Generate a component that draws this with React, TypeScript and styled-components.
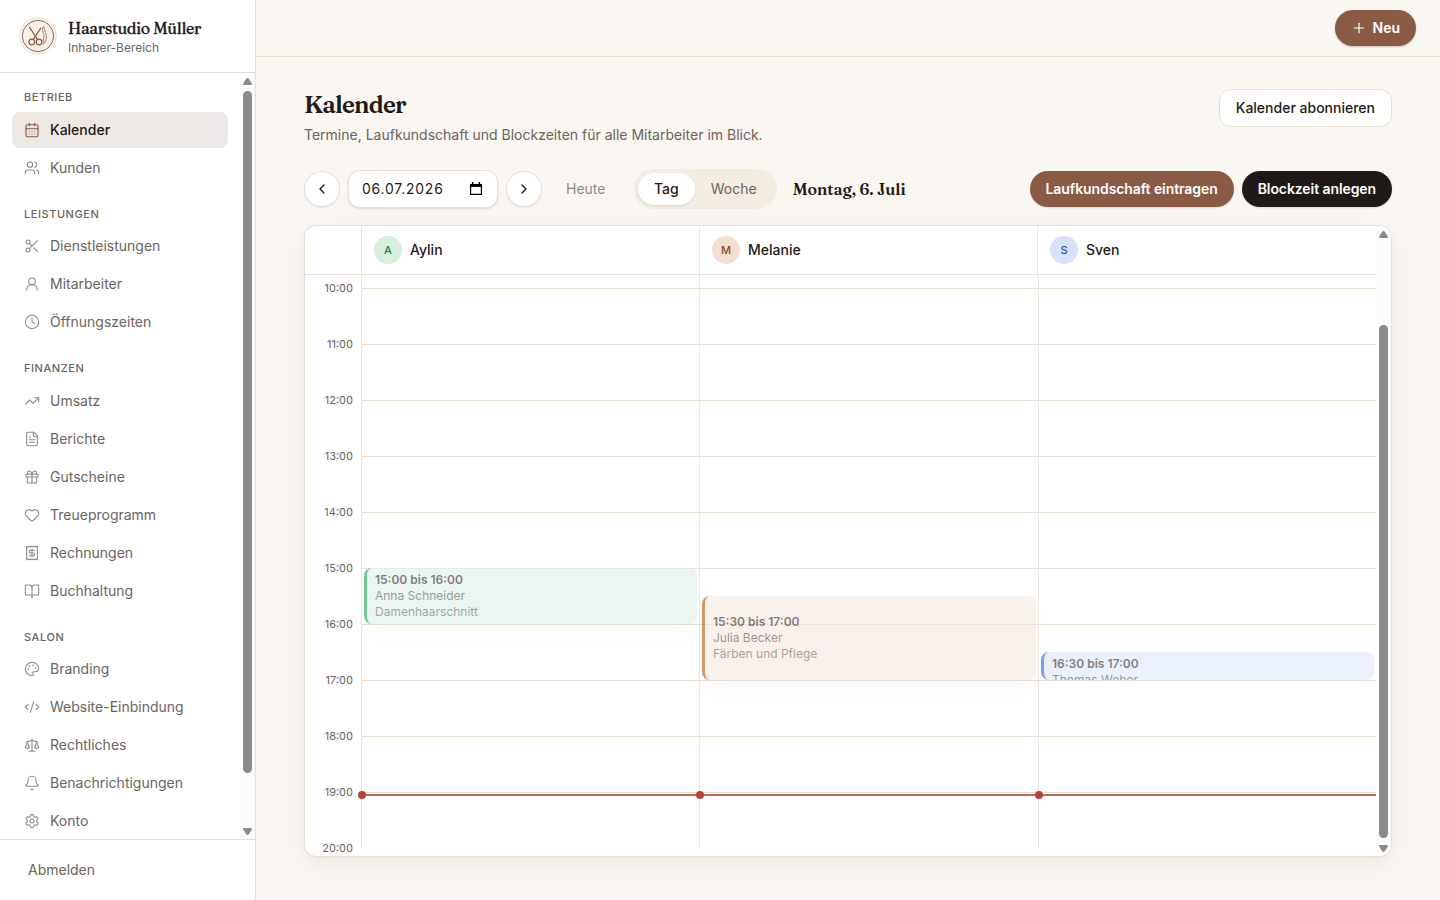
import React from "react";
import styled, { createGlobalStyle } from "styled-components";
import {
  CalendarDays, Users, Scissors, UserRound, Clock, TrendingUp, FileText, Gift, Heart, Receipt,
  BookOpen, Palette, CodeXml, Scale, Bell, Settings, Plus, ChevronLeft, ChevronRight,
  type LucideIcon,
} from "lucide-react";

const c = {
  bg: "#faf6f1",
  line: "#e8dfd3",
  column: "#eee7dd",
  ink: "#1f1a17",
  muted: "#6b6460",
  soft: "#8f8984",
  brand: "#8b5a44",
  now: "#b8403a",
  thumb: "#8b8b8b",
};

const GlobalStyle = createGlobalStyle`
  *, *::before, *::after { box-sizing: border-box; }
  html, body { margin: 0; padding: 0; }
  body {
    background: ${c.bg};
    color: ${c.ink};
    font-family: Inter, "Liberation Sans", sans-serif;
    font-size: 14px;
    line-height: 20px;
  }
  button { font: inherit; cursor: pointer; margin: 0; }
`;

const serif = `Fraunces, "Liberation Serif", serif`;

const Shell = styled.div`
  display: flex;
  width: 1440px;
  height: 900px;
  overflow: hidden;
`;

const Sidebar = styled.aside`
  display: flex;
  flex-direction: column;
  width: 256px;
  flex: none;
  background: #fff;
  border-right: 1px solid ${c.line};
`;

const Brand = styled.div`
  display: flex;
  align-items: center;
  gap: 12px;
  height: 73px;
  flex: none;
  padding: 0 20px;
  border-bottom: 1px solid ${c.line};
  svg { display: block; margin: 0 -1px; }
`;

const BrandText = styled.div`
  padding-top: 1px;
`;

const BrandName = styled.div`
  font: 500 16px/20px ${serif};
  letter-spacing: -0.32px;
  -webkit-text-stroke: 0.3px ${c.ink};
  white-space: nowrap;
`;

const BrandRole = styled.div`
  font-size: 12px;
  line-height: 16px;
  margin-top: 2px;
  color: ${c.muted};
`;

const NavArea = styled.div`
  display: flex;
  flex: 1;
  min-height: 0;
  overflow: hidden;
`;

const Nav = styled.nav`
  display: flex;
  flex-direction: column;
  flex: 1;
  gap: 20px;
  padding: 16px 12px;
`;

const NavTitle = styled.div`
  font-size: 11px;
  line-height: 16.5px;
  font-weight: 500;
  letter-spacing: 0.55px;
  text-transform: uppercase;
  color: ${c.muted};
  padding: 0 12px 6px;
`;

const NavList = styled.div`
  display: flex;
  flex-direction: column;
  gap: 2px;
`;

const NavItem = styled.a<{ $active?: boolean }>`
  display: flex;
  align-items: center;
  gap: 10px;
  height: 36px;
  padding: 0 12px;
  border-radius: 8px;
  font-weight: ${(p) => (p.$active ? 500 : 400)};
  color: ${(p) => (p.$active ? c.ink : c.muted)};
  background: ${(p) => (p.$active ? "#eee8e4" : "transparent")};
  svg { color: ${(p) => (p.$active ? c.brand : c.soft)}; }
`;

const Track = styled.div`
  display: flex;
  flex-direction: column;
  align-items: center;
  width: 15px;
  flex: none;
  background: #fcfcfc;
`;

const Thumb = styled.div<{ $before: number; $size: number }>`
  width: 9px;
  height: ${(p) => p.$size}px;
  margin-top: ${(p) => p.$before}px;
  border-radius: 5px;
  background: ${c.thumb};
`;

const Arrow = styled.svg`
  display: block;
  flex: none;
  width: 9px;
  height: 7px;
  fill: ${c.thumb};
`;
const ArrowUp = styled(Arrow)`margin-top: 5px;`;
const ArrowDown = styled(Arrow)`margin: auto 0 4px;`;

const Footer = styled.div`
  display: flex;
  align-items: center;
  height: 61px;
  flex: none;
  padding: 0 28px;
  border-top: 1px solid ${c.line};
  color: ${c.muted};
`;

const Main = styled.main`
  display: flex;
  flex-direction: column;
  flex: 1;
  min-width: 0;
`;

const TopBar = styled.header`
  display: flex;
  align-items: center;
  justify-content: flex-end;
  height: 57px;
  flex: none;
  padding: 0 24px;
  border-bottom: 1px solid ${c.line};
`;

const Pill = styled.button<{ $dark?: boolean; $strong?: boolean }>`
  display: flex;
  align-items: center;
  gap: 6px;
  height: 36px;
  padding: 0 16px;
  border: 0;
  border-radius: 18px;
  font-weight: 600;
  letter-spacing: ${(p) => (p.$strong ? "0" : "-0.085px")};
  color: #fff;
  background: ${(p) => (p.$dark ? c.ink : c.brand)};
  box-shadow: 0 1px 2px rgba(31, 26, 23, ${(p) => (p.$strong ? 0.25 : 0.12)});
  white-space: nowrap;
`;

const Content = styled.div`
  display: flex;
  flex-direction: column;
  flex: 1;
  min-height: 0;
  padding: 32px 48px 43px;
`;

const PageHead = styled.div`
  display: flex;
  justify-content: space-between;
  align-items: flex-start;
  height: 80px;
  flex: none;
`;

const Title = styled.h1`
  margin: 0;
  font: 600 24px/32px ${serif};
  letter-spacing: -0.78px;
`;

const Subtitle = styled.p`
  margin: 4px 0 0;
  color: ${c.muted};
`;

const Subscribe = styled.button`
  height: 38px;
  padding: 0 16px;
  border: 1px solid ${c.line};
  border-radius: 12px;
  background: #fff;
  color: ${c.ink};
  font-weight: 500;
`;

const Toolbar = styled.div`
  display: flex;
  align-items: center;
  height: 40px;
  flex: none;
  margin-bottom: 16px;
`;

const RoundButton = styled.button`
  display: flex;
  align-items: center;
  justify-content: center;
  width: 36px;
  height: 36px;
  padding: 0;
  border: 1px solid ${c.line};
  border-radius: 50%;
  background: #fff;
  color: ${c.ink};
  box-shadow: 0 1px 2px rgba(31, 26, 23, 0.08);
`;

const DateField = styled.div`
  display: flex;
  align-items: center;
  justify-content: space-between;
  width: 150px;
  height: 38px;
  margin: 0 8px;
  padding: 0 14px 0 13px;
  border: 1px solid ${c.line};
  border-radius: 12px;
  background: #fff;
  box-shadow: 0 1px 2px rgba(31, 26, 23, 0.12);
  letter-spacing: 0.75px;
`;

const Today = styled.button`
  border: 0;
  background: none;
  padding: 0;
  margin: 0 28.5px 0 24px;
  color: ${c.soft};
`;

const Segments = styled.div`
  display: flex;
  height: 40px;
  padding: 4px;
  border-radius: 20px;
  background: #f3ece2;
`;

const Segment = styled.button<{ $on?: boolean }>`
  height: 32px;
  padding: 0 16px;
  border: 0;
  border-radius: 16px;
  font-weight: ${(p) => (p.$on ? 500 : 400)};
  color: ${(p) => (p.$on ? c.ink : c.muted)};
  background: ${(p) => (p.$on ? "#fff" : "transparent")};
  box-shadow: ${(p) => (p.$on ? "0 1px 2px rgba(31, 26, 23, 0.12)" : "none")};
`;

const DayLabel = styled.div`
  margin-left: 16px;
  font: 600 16px/24px ${serif};
  letter-spacing: -0.05px;
  white-space: nowrap;
`;

const Actions = styled.div`
  display: flex;
  gap: 8px;
  margin-left: auto;
`;

const Card = styled.section`
  display: flex;
  flex: 1;
  min-height: 0;
  border: 1px solid ${c.line};
  border-radius: 12px;
  background: #fff;
  overflow: hidden;
  box-shadow: 0 1px 2px rgba(31, 26, 23, 0.04), 0 8px 24px -4px rgba(31, 26, 23, 0.08);
`;

const Board = styled.div`
  display: flex;
  flex-direction: column;
  flex: 1;
`;

const Staff = styled.div`
  display: grid;
  grid-template-columns: 56px 338px 338px 339px;
  height: 49px;
  flex: none;
  border-bottom: 1px solid ${c.line};
`;

const StaffCell = styled.div`
  display: flex;
  align-items: center;
  gap: 8px;
  padding-left: 12px;
  border-left: 1px solid ${c.column};
  font-weight: 500;
`;

const Avatar = styled.span<{ $bg: string; $fg: string }>`
  display: flex;
  align-items: center;
  justify-content: center;
  width: 28px;
  height: 28px;
  border-radius: 50%;
  font-size: 11px;
  background: ${(p) => p.$bg};
  color: ${(p) => p.$fg};
`;

const Grid = styled.div`
  display: grid;
  grid-template-columns: 56px 338px 339px 338px;
  grid-template-rows: 573px;
`;

const Hours = styled.div`
  display: flex;
  flex-direction: column;
  padding-top: 5px;
`;

const Hour = styled.div`
  flex: none;
  height: 56px;
  padding-right: 8px;
  text-align: right;
  font-size: 11px;
  line-height: 16px;
  color: ${c.muted};
`;

const Column = styled.div`
  position: relative;
  border-left: 1px solid ${c.column};
  padding-top: 13px;
`;

const Slot = styled.div`
  height: 56px;
  border-top: 1px solid ${c.line};
`;

type Tone = "green" | "orange" | "blue";
const tones: Record<Tone, [string, string]> = {
  green: ["#dff0e8", "#16a34a"],
  orange: ["#f6e8df", "#b45309"],
  blue: ["#dde8fd", "#2563eb"],
};

const Event = styled.div<{ $tone: Tone; $top: number; $height: number; $short?: boolean }>`
  position: absolute;
  left: 2px;
  right: 2px;
  top: ${(p) => p.$top}px;
  height: ${(p) => p.$height}px;
  display: flex;
  flex-direction: column;
  justify-content: ${(p) => (p.$short ? "flex-start" : "center")};
  padding: ${(p) => (p.$short ? "4px 8px 0" : "0 8px")};
  border-left: 3px solid ${(p) => tones[p.$tone][1]};
  border-radius: 8px;
  background: ${(p) => tones[p.$tone][0]};
  opacity: 0.6;
  overflow: hidden;
  font-size: 12px;
  line-height: 16px;
  box-shadow: 0 8px 24px -6px rgba(31, 26, 23, ${(p) => (p.$short ? 0 : 0.06)});
`;

const EventLine = styled.div<{ $level: number }>`
  flex: none;
  font-weight: ${(p) => (p.$level === 0 ? 600 : 400)};
  color: ${c.ink};
  opacity: ${(p) => [0.95, 0.75, 0.65][p.$level]};
`;

const NowLine = styled.div`
  position: absolute;
  left: 0;
  right: 0;
  top: 519px;
  height: 2px;
  background: rgba(184, 64, 58, 0.8);
  &::before {
    content: "";
    position: absolute;
    left: -4px;
    top: -3px;
    width: 8px;
    height: 8px;
    border-radius: 50%;
    background: ${c.now};
  }
`;

const nav: { title: string; items: [string, LucideIcon][] }[] = [
  { title: "Betrieb", items: [["Kalender", CalendarDays], ["Kunden", Users]] },
  { title: "Leistungen", items: [["Dienstleistungen", Scissors], ["Mitarbeiter", UserRound], ["Öffnungszeiten", Clock]] },
  {
    title: "Finanzen",
    items: [["Umsatz", TrendingUp], ["Berichte", FileText], ["Gutscheine", Gift], ["Treueprogramm", Heart], ["Rechnungen", Receipt], ["Buchhaltung", BookOpen]],
  },
  {
    title: "Salon",
    items: [["Branding", Palette], ["Website-Einbindung", CodeXml], ["Rechtliches", Scale], ["Benachrichtigungen", Bell], ["Konto", Settings]],
  },
];

const hours = ["10:00", "11:00", "12:00", "13:00", "14:00", "15:00", "16:00", "17:00", "18:00", "19:00", "20:00"];

type Booking = { tone: Tone; top: number; height: number; short?: boolean; lines: string[] };
const staff: { name: string; bg: string; fg: string; booking: Booking }[] = [
  { name: "Aylin", bg: "#d7eee0", fg: "#1f7a45", booking: { tone: "green", top: 293, height: 56, lines: ["15:00 bis 16:00", "Anna Schneider", "Damenhaarschnitt"] } },
  { name: "Melanie", bg: "#f2dfd2", fg: "#8f4a1c", booking: { tone: "orange", top: 321, height: 84, lines: ["15:30 bis 17:00", "Julia Becker", "Färben und Pflege"] } },
  { name: "Sven", bg: "#d9e2fb", fg: "#1d4fc4", booking: { tone: "blue", top: 377, height: 28, short: true, lines: ["16:30 bis 17:00", "Thomas Weber"] } },
];

const Logo = () => (
  <svg width="38" height="38" viewBox="0 0 38 38" fill="none" strokeLinecap="round">
    <circle cx="19" cy="19" r="18.3" fill="#fbf8f4" stroke={c.line} />
    <circle cx="19" cy="19" r="15.7" fill="#f8f1ea" stroke="#97644e" strokeWidth="1" />
    <g stroke="#8b5a44" strokeWidth="1.2">
      <circle cx="12.8" cy="25" r="2.800" />
      <circle cx="20" cy="25" r="2.800" />
      <path d="M10.6 10.400 18.600 22.600M21.800 11.200 14.200 22.600" />
    </g>
    <path d="M24.200 9.800c-2.200 4 1.300 6.500.7 10.500-.3 2-1 3.500-1 5.500M24.800 9.800c.6 4.200 3 7.200 2.500 11.200-.4 3-1.600 5-3.500 6.500" stroke="#a97c68" strokeWidth="1" />
  </svg>
);

const ScrollUp = () => (
  <ArrowUp viewBox="0 0 9 7"><path d="M4.500 0Q5.200 0 5.800.8L8.600 5Q9.400 7 8 7H1Q-.4 7 .4 5L3.200.8Q3.800 0 4.500 0Z" /></ArrowUp>
);
const ScrollDown = () => (
  <ArrowDown viewBox="0 0 9 7"><path d="M4.500 7Q5.200 7 5.800 6.200L8.600 2Q9.400 0 8 0H1Q-.4 0 .4 2L3.200 6.200Q3.800 7 4.500 7Z" /></ArrowDown>
);

export default function App() {
  return (
    <>
      <GlobalStyle />
      <Shell>
        <Sidebar>
          <Brand>
            <Logo />
            <BrandText>
              <BrandName>Haarstudio Müller</BrandName>
              <BrandRole>Inhaber-Bereich</BrandRole>
            </BrandText>
          </Brand>
          <NavArea>
            <Nav>
              {nav.map((group) => (
                <div key={group.title}>
                  <NavTitle>{group.title}</NavTitle>
                  <NavList>
                    {group.items.map(([label, Icon]) => (
                      <NavItem key={label} $active={label === "Kalender"}>
                        <Icon size={16} strokeWidth={1.6} />
                        {label}
                      </NavItem>
                    ))}
                  </NavList>
                </div>
              ))}
            </Nav>
            <Track>
              <ScrollUp />
              <Thumb $before={6} $size={682} />
              <ScrollDown />
            </Track>
          </NavArea>
          <Footer>Abmelden</Footer>
        </Sidebar>
        <Main>
          <TopBar>
            <Pill $strong><Plus size={16} strokeWidth={1.75} />Neu</Pill>
          </TopBar>
          <Content>
            <PageHead>
              <div>
                <Title>Kalender</Title>
                <Subtitle>Termine, Laufkundschaft und Blockzeiten für alle Mitarbeiter im Blick.</Subtitle>
              </div>
              <Subscribe>Kalender abonnieren</Subscribe>
            </PageHead>
            <Toolbar>
              <RoundButton aria-label="Zurück"><ChevronLeft size={16} /></RoundButton>
              <DateField>
                06.07.2026
                <svg width="14" height="14" viewBox="0 0 14 14" fill="none" stroke="#000" strokeWidth="1.200">
                  <path d="M1.600 2.600h10.800v9.800H1.600z" />
                  <path d="M1 3.600h12" strokeWidth="2.600" />
                  <path d="M3.600 0v2.500M10.400 0v2.500" strokeWidth="1.400" />
                </svg>
              </DateField>
              <RoundButton aria-label="Weiter"><ChevronRight size={16} /></RoundButton>
              <Today>Heute</Today>
              <Segments>
                <Segment $on>Tag</Segment>
                <Segment>Woche</Segment>
              </Segments>
              <DayLabel>Montag, 6. Juli</DayLabel>
              <Actions>
                <Pill>Laufkundschaft eintragen</Pill>
                <Pill $dark>Blockzeit anlegen</Pill>
              </Actions>
            </Toolbar>
            <Card>
              <Board>
                <Staff>
                  <div />
                  {staff.map((s) => (
                    <StaffCell key={s.name}>
                      <Avatar $bg={s.bg} $fg={s.fg}>{s.name[0]}</Avatar>
                      {s.name}
                    </StaffCell>
                  ))}
                </Staff>
                <Grid>
                  <Hours>
                    {hours.map((h) => <Hour key={h}>{h}</Hour>)}
                  </Hours>
                  {staff.map(({ name, booking: b }) => (
                    <Column key={name}>
                      {hours.slice(0, -1).map((h) => <Slot key={h} />)}
                      <Event $tone={b.tone} $top={b.top} $height={b.height} $short={b.short}>
                        {b.lines.map((line, i) => <EventLine key={line} $level={i}>{line}</EventLine>)}
                      </Event>
                      <NowLine />
                    </Column>
                  ))}
                </Grid>
              </Board>
              <Track>
                <ScrollUp />
                <Thumb $before={87} $size={513} />
                <ScrollDown />
              </Track>
            </Card>
          </Content>
        </Main>
      </Shell>
    </>
  );
}
